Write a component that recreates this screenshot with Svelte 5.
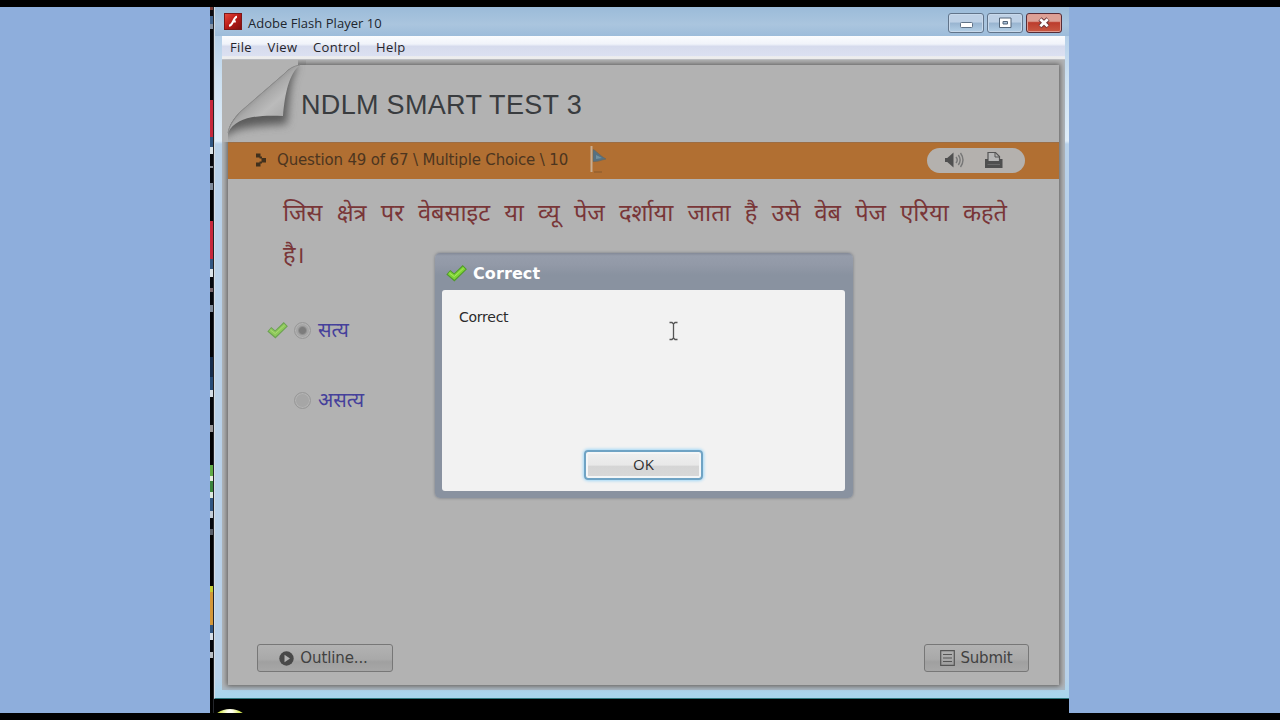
<script>
  let menus = ["File", "View", "Control", "Help"];
  let question = [
    "जिस क्षेत्र पर वेबसाइट या व्यू पेज दर्शाया जाता है उसे वेब पेज एरिया कहते",
    "है।",
  ];
  let answers = ["सत्य", "असत्य"];
  let selected = 0;
  let dialogOpen = true;

  // slices of the desktop icons still visible left of the window
  let slices = [
    { h: 3, color: "#7c3b35" },
    { h: 6, color: "#0b0b10" },
    { h: 8, color: "#41658f" },
    { h: 5, color: "#8493a5" },
    { h: 2, color: "#05070a" },
    { h: 69, color: "#030407" },
    { h: 37, color: "#c8283c" },
    { h: 10, color: "#315783" },
    { h: 7, color: "#dce5ea" },
    { h: 12, color: "#05080d" },
    { h: 2, color: "#8a9299" },
    { h: 15, color: "#05080d" },
    { h: 7, color: "#7f8b9a" },
    { h: 31, color: "#020304" },
    { h: 38, color: "#c8283c" },
    { h: 10, color: "#315783" },
    { h: 8, color: "#dce5ea" },
    { h: 11, color: "#05080d" },
    { h: 4, color: "#76656a" },
    { h: 13, color: "#05080d" },
    { h: 7, color: "#7f8b9a" },
    { h: 45, color: "#020407" },
    { h: 20, color: "#152d4d" },
    { h: 13, color: "#264c78" },
    { h: 7, color: "#d5dfe8" },
    { h: 28, color: "#05080d" },
    { h: 7, color: "#989798" },
    { h: 33, color: "#020304" },
    { h: 11, color: "#60ac45" },
    { h: 5, color: "#e5efe0" },
    { h: 11, color: "#3a853c" },
    { h: 6, color: "#dce8df" },
    { h: 13, color: "#315783" },
    { h: 7, color: "#c2ced9" },
    { h: 11, color: "#05080d" },
    { h: 6, color: "#59606a" },
    { h: 51, color: "#020304" },
    { h: 6, color: "#c7cf32" },
    { h: 33, color: "#d49838" },
    { h: 8, color: "#315783" },
    { h: 7, color: "#d5dfe8" },
    { h: 12, color: "#05080d" },
    { h: 6, color: "#b9c0c5" },
  ];
</script>

{#snippet tick()}
  <svg class="tick" width="22" height="18" viewBox="0 0 22 18">
    <path d="M2.3 8.2 L8.3 13.4 L18.8 3.2" fill="none" stroke="#4f9a2b" stroke-width="6" />
    <path d="M3 8.8 L8.3 13.2 L18.2 3.8" fill="none" stroke="#7fd435" stroke-width="3.8" />
    <path d="M3.4 9 L8.3 12.6 L17.6 4.2" fill="none" stroke="#a5e75d" stroke-width="1" />
  </svg>
{/snippet}

<main class="screen">
  <div class="desktop">
    <div class="slices">
      {#each slices as slice}
        <i style="height: {slice.h}px; background: {slice.color}"></i>
      {/each}
    </div>
    <div class="column">
      <section class="window">
        <header class="titlebar">
          <svg width="18" height="17" viewBox="0 0 18 17">
            <defs>
              <linearGradient id="red" x1="0" y1="0" x2="1" y2="1">
                <stop offset="0" stop-color="#e8493b" />
                <stop offset="0.5" stop-color="#b81a17" />
                <stop offset="1" stop-color="#7c0f0f" />
              </linearGradient>
            </defs>
            <rect x=".5" y=".5" width="17" height="16" fill="url(#red)" stroke="#7c1818" />
            <path d="M13 3.8 C9.2 4 9.4 12.4 5 12.7 M8.3 8.5 H11.8" fill="none" stroke="#fff" stroke-width="2" />
          </svg>
          <span class="name">Adobe Flash Player 10</span>
          <div class="controls">
            <button aria-label="Minimize">
              <svg width="34" height="18" viewBox="0 0 34 18"><rect x="11.5" y="8.5" width="12" height="5" rx="1" fill="#fff" stroke="#5e7186" /></svg>
            </button>
            <button aria-label="Maximize">
              <svg width="34" height="18" viewBox="0 0 34 18"><path fill-rule="evenodd" d="M11.5 4 h11.5 v9.5 h-11.5 z M15 7.5 v2.5 h4.5 v-2.5 z" fill="#fff" stroke="#536578" /></svg>
            </button>
            <button class="close" aria-label="Close">
              <svg width="34" height="18" viewBox="0 0 34 18">
                <path d="M13 5 L21 12.6 M21 5 L13 12.6" stroke="#6b3436" stroke-width="4.6" />
                <path d="M13.3 5.3 L20.7 12.3 M20.7 5.3 L13.3 12.3" stroke="#fff" stroke-width="2.8" />
              </svg>
            </button>
          </div>
        </header>
        <nav class="menubar">
          {#each menus as menu}
            <span>{menu}</span>
          {/each}
        </nav>
        <div class="player">
          <article class="page">
            <svg class="curl" width="84" height="82" viewBox="0 0 84 82">
              <defs>
                <linearGradient id="paper" gradientUnits="userSpaceOnUse" x1="36" y1="33" x2="58" y2="58">
                  <stop offset="0" stop-color="#929292" />
                  <stop offset="0.2" stop-color="#a9a9a9" />
                  <stop offset="0.55" stop-color="#bbb" />
                  <stop offset="1" stop-color="#acacac" />
                </linearGradient>
                <linearGradient id="rim" x1="0" y1="0" x2="0" y2="1">
                  <stop offset="0" stop-color="#a8a8a8" />
                  <stop offset="1" stop-color="#747474" />
                </linearGradient>
                <filter id="soft" x="-30%" y="-30%" width="160%" height="160%">
                  <feGaussianBlur stdDeviation="4" />
                </filter>
                <clipPath id="sheet"><path d="M6 82 V74 C6 66 12 58 18 52 L63 13 Q70 5 80 5 H84 V82 Z" /></clipPath>
              </defs>
              <path d="M0 0 H76 V5 Q69 6 63 12 L16 53 C9 60 6 66 6 76 V82 H0 Z" fill="#b2b2b2" />
              <rect x="76" y="0" width="8" height="5" fill="url(#rim)" />
              <g clip-path="url(#sheet)">
                <path d="M0 80 C10 66 36 66 65 64 C68 34 68 18 76 6 L60 0 L0 50 Z" fill="#5c5c5c" filter="url(#soft)" />
              </g>
              <path d="M6 73 C7 66 12 59 18 52 L62 14 Q69 6 78 5 C67 14 63 33 61 56 C42 55 14 55 6 73 Z" fill="url(#paper)" />
              <path d="M6 73 C7 66 12 59 18 52 L62 14 Q69 6 78 5" fill="none" stroke="#8c8c8c" />
            </svg>
            <h1>NDLM SMART TEST 3</h1>
            <div class="infobar">
              <svg class="bullet" width="11" height="14" viewBox="0 0 11 14">
                <path d="M0 .5h4.5v4H0z M3.5 3.5h2.5v2H3.5z M5.5 5h4.5v4.5H5.5z M3.5 8.5h2.5v2H3.5z M0 9.5h4.5v4H0z" fill="#40301d" />
              </svg>
              <span class="crumb">Question 49 of 67 \ Multiple Choice \ 10</span>
              <svg class="flag" width="18" height="28" viewBox="0 0 18 28">
                <path d="M4 26 H12" stroke="#96602f" stroke-width="1.5" />
                <path d="M3 3.5 C6 4.5 9 9 16 13 C11 14 8 16 3 15.5 Z" fill="#567182" stroke="#6b675a" stroke-width=".7" />
                <path d="M6 9 L12 12 L6 13 Z" fill="#7191a0" />
                <path d="M1.5 0 V26" stroke="#c9ae91" stroke-width="2" />
              </svg>
              <div class="pill">
                <svg width="22" height="18" viewBox="0 0 22 18">
                  <path d="M1 9 L9.5 1.5 V16.5 Z" fill="#505050" />
                  <path d="M1 7 H5 V11 H1 Z" fill="#505050" />
                  <path d="M12 6 Q14.5 9 12 12 M14.3 4 Q18 9 14.3 14 M16.5 2 Q21.5 9 16.5 16" fill="none" stroke="#777" stroke-width="1.4" />
                </svg>
                <svg width="20" height="18" viewBox="0 0 20 18">
                  <path d="M4 10 V1.5 H11.5 L15.5 5.5 V10" fill="#b6b6b6" stroke="#555" stroke-width="1.2" />
                  <path d="M11 1.5 V6 H15.5" fill="none" stroke="#555" />
                  <path d="M1 8 H4 V10 H15.5 V8 H18.5 V17 H1 Z" fill="#4f4f4f" />
                  <path d="M3.5 13.5 H16" stroke="#6a6a6a" />
                </svg>
              </div>
            </div>
            <div class="question">
              {#each question as line, i}
                <p class:full={i === 0}>{line}</p>
              {/each}
            </div>
            <ul class="answers">
              {#each answers as answer, i}
                <li>
                  <span class="mark">{#if i === selected}{@render tick()}{/if}</span>
                  <span class="radio" class:on={i === selected}></span>
                  <span class="label">{answer}</span>
                </li>
              {/each}
            </ul>
            <footer>
              <button class="btn outline">
                <svg width="15" height="15" viewBox="0 0 15 15">
                  <circle cx="7.5" cy="7.5" r="7.2" fill="#494949" />
                  <path d="M5.5 3.8 L11 7.5 L5.5 11.2 Z" fill="#b2b2b2" />
                </svg>
                <span>Outline...</span>
              </button>
              <button class="btn submit">
                <svg width="15" height="16" viewBox="0 0 15 16">
                  <path d="M.7 .7 H14.3 V15.3 H.7 Z M3 4.5 H12 M3 8 H12 M3 11.5 H12" fill="none" stroke="#555" stroke-width="1.2" />
                </svg>
                <span>Submit</span>
              </button>
            </footer>
          </article>
        </div>
      </section>
      <div class="taskbar"><i class="orb"></i></div>
    </div>
  </div>

  {#if dialogOpen}
    <div class="dialog">
      <div class="dialog-title">{@render tick()}<span>Correct</span></div>
      <div class="dialog-body">
        <p>Correct</p>
        <button class="ok" on:click={() => (dialogOpen = false)}><span>OK</span></button>
      </div>
    </div>
  {/if}

  <svg class="cursor" width="11" height="20" viewBox="0 0 11 20">
    <path d="M1.5 1.5 H4 L5.5 3 L7 1.5 H9.5 M5.5 3 V17 M1.5 18.5 H4 L5.5 17 L7 18.5 H9.5" fill="none" stroke="#555" stroke-width="1.3" />
  </svg>
</main>

<style>
  :global(body) {
    margin: 0;
    background: #000;
  }

  * {
    box-sizing: border-box;
  }

  p,
  h1,
  ul {
    margin: 0;
    padding: 0;
  }

  button {
    margin: 0;
    padding: 0;
    border: 0;
    font: inherit;
    color: inherit;
  }

  svg {
    display: block;
    flex: none;
  }

  span {
    white-space: nowrap;
  }

  .screen {
    position: relative;
    width: 1280px;
    height: 720px;
    padding: 7px 0;
    overflow: hidden;
    background: #000;
  }

  .desktop {
    height: 706px;
    padding: 0 211px 0 210px;
    display: flex;
    background: #8eaedc;
  }

  .slices {
    width: 4px;
    background: #000;
    border-right: 1px solid #24262b;
  }

  .slices i {
    display: block;
  }

  .column {
    width: 855px;
    display: flex;
    flex-direction: column;
  }

  .window {
    height: 692px;
    padding: 0 4px 0 7px;
    background: linear-gradient(#a5c3e1 0, #cde1f2 70px, #e0eefa 134px, #b9d2ea 137px, #b9d2ea 670px, #a9d5ed 688px);
    border-bottom: 1px solid #2f777e;
    border-left: 1px solid #d3dce2;
  }

  .titlebar {
    height: 29px;
    margin: 0 -4px 0 -7px;
    padding: 0 7px 0 9px;
    display: flex;
    background: linear-gradient(#9bbbd9, #aac5de 60%, #9dbcda);
    font: 13px "Open Sans", "Noto Sans", sans-serif;
    color: #20262e;
  }

  .titlebar > svg {
    margin-top: 6px;
  }

  .name {
    margin: 7px 0 0 6px;
    line-height: 18px;
    letter-spacing: 0.03px;
  }

  .controls {
    margin: 6px 0 0 auto;
    display: flex;
    gap: 3px;
  }

  .controls button {
    width: 36px;
    height: 20px;
    border: 1px solid #61748a;
    border-radius: 3px;
    box-shadow: inset 0 0 0 1px #c8d9eb;
    background: linear-gradient(#bdd0e5 45%, #98b4d0 50%, #b3cfe6);
  }

  .controls .close {
    border-color: #552d37;
    box-shadow: inset 0 0 0 1px #df9b91;
    background: linear-gradient(#dca196 40%, #bc3d2d 48%, #c85943);
  }

  .menubar {
    height: 24px;
    padding: 0 8px;
    display: flex;
    gap: 15.6px;
    font: 13px/23px "Open Sans", "Noto Sans", sans-serif;
    letter-spacing: 0.35px;
    color: #24242b;
    background: linear-gradient(#fbfcfe 0, #f0f3fa 35%, #d6dbed 45%, #dbe0f1 85%, #eee 90%);
    border-bottom: 1px solid #bfc1c5;
  }

  .player {
    height: 630px;
    padding: 5px 6px 5px;
    background: #b2b2b2;
    box-shadow: inset 0 -3px 4px #a8b8c5;
  }

  .page {
    position: relative;
    width: 831px;
    height: 620px;
    display: flex;
    flex-direction: column;
    background: #b2b2b2;
    box-shadow: 0 0 5px 1px #5c5c5c;
  }

  /* folded sheet corner, reaches over the page edge */
  .curl {
    position: absolute;
    left: -6px;
    top: -5px;
  }

  h1 {
    height: 77px;
    padding: 23px 0 0 73px;
    font: 27px/34px "Liberation Sans", Arial, sans-serif;
    letter-spacing: 0.32px;
    color: #393c3f;
    white-space: nowrap;
  }

  .infobar {
    height: 37px;
    padding: 0 34px 2px 28px;
    display: flex;
    align-items: center;
    background: #b16f32;
    border-top: 1px solid #9d6d43;
    color: #4c351f;
    font: 15px/20px "DejaVu Sans", Verdana, sans-serif;
  }

  .crumb {
    width: 292px;
    margin-left: 10px;
    letter-spacing: -0.16px;
  }

  .flag {
    margin-left: 21px;
  }

  .pill {
    width: 98px;
    height: 25px;
    margin-left: auto;
    padding: 0 21px 0 17px;
    display: flex;
    align-items: center;
    justify-content: space-between;
    border-radius: 13px;
    background: #b4b1ae;
  }

  .question {
    width: 724px;
    height: 119px;
    margin: 16px 0 0 55px;
    color: #793638;
    font: 23.6px/42px "Noto Sans Devanagari", "Lohit Devanagari", Mangal, "Noto Sans", serif;
  }

  .question p {
    height: 42px;
    white-space: nowrap;
  }

  .question .full {
    white-space: normal;
    text-align-last: justify;
  }

  .answers {
    padding-left: 39px;
    list-style: none;
    color: #45409b;
    font: 20px/32px "Noto Sans Devanagari", "Lohit Devanagari", Mangal, "Noto Sans", serif;
  }

  .answers li {
    height: 32px;
    margin-bottom: 38px;
    display: flex;
    align-items: center;
  }

  .mark {
    width: 27px;
  }

  .mark .tick {
    opacity: 0.7;
  }

  .radio {
    width: 17px;
    height: 17px;
    margin-right: 7px;
    border: 1px solid #989898;
    border-radius: 50%;
    background: #a6a6a6;
    box-shadow: inset 0 0 0 1px #b4b4b4;
  }

  .radio.on {
    background: radial-gradient(circle, #7c7c7c 3px, #a6a6a6 5px);
  }

  .label {
    padding-top: 3px;
  }

  footer {
    margin-top: auto;
    padding: 0 30px 13px 29px;
    display: flex;
    justify-content: space-between;
  }

  .btn {
    height: 28px;
    display: flex;
    align-items: center;
    justify-content: center;
    border: 1px solid #777;
    border-radius: 3px;
    background: linear-gradient(#b2b2b2, #a9a9a9 55%, #a0a0a0 65%, #a7a7a7);
    color: #414141;
    font: 15px "DejaVu Sans", Verdana, sans-serif;
    gap: 6px;
  }

  .outline {
    width: 136px;
    padding-right: 3px;
    letter-spacing: -0.12px;
  }

  .submit {
    width: 105px;
    gap: 5px;
    letter-spacing: -0.2px;
  }

  .taskbar {
    height: 14px;
    overflow: hidden;
    background: #000;
  }

  .orb {
    display: block;
    width: 34px;
    height: 24px;
    margin: 10px 0 0 -1px;
    border-radius: 50%;
    background: radial-gradient(ellipse at 50% 15%, #fffff0 10%, #d7e85a 40%, #6e851e);
  }

  .dialog {
    position: absolute;
    left: 435px;
    top: 253px;
    width: 418px;
    height: 245px;
    padding: 0 8px 7px 7px;
    border-radius: 5px;
    background: linear-gradient(#838997, #969dab 3px, #9299a7 12px, #8992a0 22px);
    box-shadow: 0 0 3px 0 #70757e;
  }

  .dialog-title {
    height: 37px;
    padding: 3px 0 0 4px;
    display: flex;
    align-items: center;
    gap: 5px;
    color: #fff;
    font: bold 16px "DejaVu Sans", Verdana, sans-serif;
    letter-spacing: 0.1px;
  }

  .dialog-body {
    height: 201px;
    padding: 17px 142px 11px;
    display: flex;
    flex-direction: column;
    justify-content: space-between;
    border-radius: 3px;
    background: #f2f2f2;
  }

  .dialog-body p {
    margin-left: -125px;
    color: #2b2b2b;
    font: 14px/21px "DejaVu Sans", Tahoma, sans-serif;
    letter-spacing: -0.25px;
  }

  .ok {
    width: 119px;
    height: 30px;
    padding-bottom: 2px;
    border: 2px solid #6fa3c4;
    border-radius: 4px;
    background: linear-gradient(#f0f0f0 0, #e8e8e8 50%, #d5d5d5 55%, #d8d8d8);
    box-shadow: 0 0 3px 1px #a3d8f7, inset 0 0 0 2px #f4f6f7;
    color: #303030;
    font: 15px "Open Sans", sans-serif;
  }

  .cursor {
    position: absolute;
    left: 668px;
    top: 321px;
  }
</style>
